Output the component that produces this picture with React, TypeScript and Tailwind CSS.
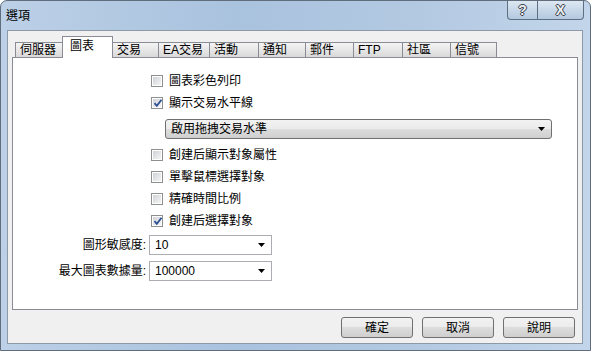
import React from "react";

const tabs = [
  { label: "伺服器", w: "w-[48px]" },
  { label: "圖表", w: "w-[51px]", active: true },
  { label: "交易", w: "w-[47px]" },
  { label: "EA交易", w: "w-[52px]" },
  { label: "活動", w: "w-[50px]" },
  { label: "通知", w: "w-[48px]" },
  { label: "郵件", w: "w-[49px]" },
  { label: "FTP", w: "w-[50px]" },
  { label: "社區", w: "w-[49px]" },
  { label: "信號", w: "w-[47px]" },
];

function CheckBox({ checked }: { checked?: boolean }) {
  return (
    <span className="relative w-[12px] h-[12px] border border-[#8e8f8f] bg-white p-[1px] flex shrink-0">
      <span className="flex-1 bg-gradient-to-br from-[#cfd2d6] to-[#f5f5f5]" />
      {checked && (
        <svg className="absolute left-[1px] top-[0px]" width="10" height="10" viewBox="0 0 10 10">
          <path d="M1.5 5.2 L3.8 7.8 L8.5 1.8" stroke="#2c4f94" strokeWidth="1.8" fill="none" />
        </svg>
      )}
    </span>
  );
}

function CheckRow({ label, checked }: { label: string; checked?: boolean }) {
  return (
    <div className="h-[22px] pl-[138px] flex items-center gap-[6px]">
      <CheckBox checked={checked} />
      <span>{label}</span>
    </div>
  );
}

function Arrow() {
  return (
    <svg width="7" height="4" viewBox="0 0 7 4">
      <path d="M0 0 H7 L3.5 4 Z" fill="#000" />
    </svg>
  );
}

function Combo({ label, value, className }: { label: string; value: string; className: string }) {
  return (
    <div className={`flex items-center ${className}`}>
      <span className="w-[133px] text-right">{label}</span>
      <div className="ml-[3px] w-[123px] h-[20px] border border-[#abadb3] bg-white flex items-center pl-[5px] pr-[6px]">
        <span className="flex-1">{value}</span>
        <Arrow />
      </div>
    </div>
  );
}

function Button({ label }: { label: string }) {
  return (
    <div className="w-[72px] h-[21px] rounded-[3px] border border-[#707070] bg-[linear-gradient(#f2f2f2,#ebebeb_50%,#dddddd_50%,#cfcfcf)] flex items-center justify-center">
      {label}
    </div>
  );
}

export default function App() {
  return (
    <div className="w-[591px] h-[351px] flex flex-col rounded-t-[7px] border border-[#5f6d7d] bg-[linear-gradient(90deg,#bcd0e7,#a9c2de_40%,#b3c9e2_70%,#c2d5ea)] text-[12px] leading-[14px] text-black [font-family:'Liberation_Sans','Noto_Sans_CJK_TC',sans-serif] overflow-hidden">
      {/* title bar */}
      <div className="h-[29px] flex items-start">
        <span className="pl-[5px] pt-[8px]">選項</span>
        <div className="ml-auto mr-[6px] flex h-[19px]">
          <div className="w-[31px] border border-t-0 border-[#5f6f82] rounded-bl-[4px] bg-gradient-to-b from-[#dde7f2] to-[#b3c8df] flex items-center justify-center font-bold text-[14px] text-[#eef1f4] [text-shadow:1px_0_0_#3a3f46,-1px_0_0_#3a3f46,0_1px_0_#3a3f46,0_-1px_0_#3a3f46]">
            ?
          </div>
          <div className="w-[46px] border border-t-0 border-l-0 border-[#5f6f82] rounded-br-[4px] bg-gradient-to-b from-[#dde7f2] to-[#b3c8df] flex items-center justify-center font-bold text-[14px] text-[#eef1f4] [text-shadow:1px_0_0_#3a3f46,-1px_0_0_#3a3f46,0_1px_0_#3a3f46,0_-1px_0_#3a3f46]">
            X
          </div>
        </div>
      </div>

      {/* client */}
      <div className="ml-[6px] mr-[7px] mb-[6px] flex-1 border border-[#8d99a6] bg-[#f0f0f0] flex flex-col">
        <div className="h-[26px] pl-[7px] flex items-end">
          {tabs.map((t, i) =>
            t.active ? (
              <div
                key={t.label}
                className={`${t.w} h-[22px] -mb-[1px] ${i > 0 ? "-ml-[1px]" : ""} relative z-10 border border-b-0 border-[#898c95] bg-white pl-[7px] pt-[2px]`}
              >
                {t.label}
              </div>
            ) : (
              <div
                key={t.label}
                className={`${t.w} h-[15px] ${i > 0 ? "-ml-[1px]" : ""} border border-b-0 border-[#898c95] bg-gradient-to-b from-[#f4f4f4] to-[#d9d9d9] pl-[4px] flex items-center`}
              >
                {t.label}
              </div>
            )
          )}
        </div>

        <div className="mx-[4px] h-[253px] border border-[#898c95] bg-white flex flex-col pt-[12px]">
          <CheckRow label="圖表彩色列印" />
          <CheckRow label="顯示交易水平線" checked />
          <div className="ml-[152px] mt-[5px] w-[387px] h-[20px] rounded-[3px] border border-[#707070] bg-[linear-gradient(#f2f2f2,#ebebeb_50%,#dddddd_50%,#cfcfcf)] flex items-center pl-[5px] pr-[6px]">
            <span className="flex-1">啟用拖拽交易水準</span>
            <Arrow />
          </div>
          <div className="mt-[5px]">
            <CheckRow label="創建后顯示對象屬性" />
            <CheckRow label="單擊鼠標選擇對象" />
            <CheckRow label="精確時間比例" />
            <CheckRow label="創建后選擇對象" checked />
          </div>
          <Combo label="圖形敏感度:" value="10" className="mt-[3px]" />
          <Combo label="最大圖表數據量:" value="100000" className="mt-[6px]" />
        </div>

        <div className="mt-[7px] pr-[7px] flex justify-end gap-[9px]">
          <Button label="確定" />
          <Button label="取消" />
          <Button label="說明" />
        </div>
      </div>
    </div>
  );
}
